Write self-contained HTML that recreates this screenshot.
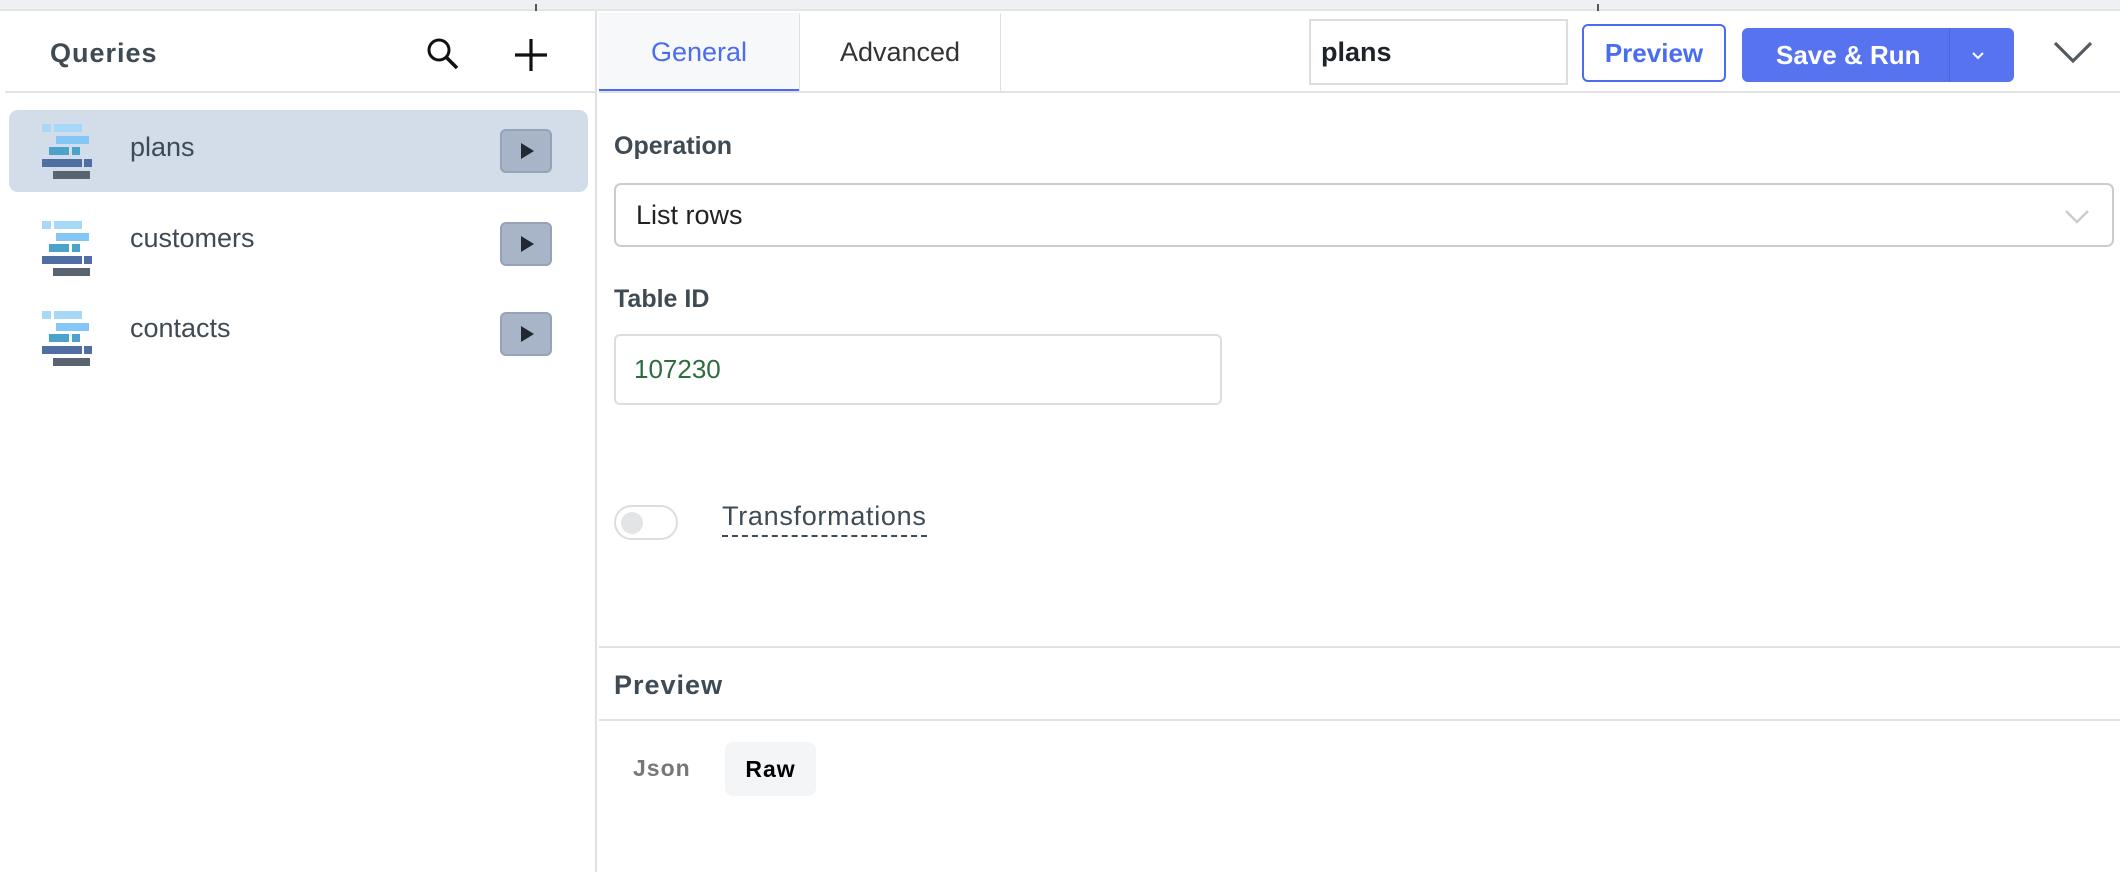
<!DOCTYPE html>
<html><head><meta charset="utf-8"><style>
*{box-sizing:border-box;margin:0;padding:0}
body{width:2120px;height:872px;background:#fff;font-family:"Liberation Sans",Arial,sans-serif;position:relative;overflow:hidden;color:#3e4b55}
.abs{position:absolute}
.topbar{left:0;top:0;width:2120px;height:11px;background:#eef0f4;border-bottom:2px solid #e2e4e8}
.side{left:0;top:11px;width:597px;height:861px;border-right:2px solid #e0e0e0}
.hline{height:2px;background:#e2e2e2}
.row{left:9px;width:579px;height:82px;border-radius:9px}
.row .t{position:absolute;left:121px;top:0;line-height:82px;font-size:27px;color:#3e4b55}
.play{position:absolute;left:491px;top:19px;width:52px;height:44px;background:#a8b4c8;border:2px solid #96a2b6;border-radius:6px}
.play:after{content:"";position:absolute;left:19px;top:12px;border-left:13px solid #222831;border-top:8px solid transparent;border-bottom:8px solid transparent}
.ico{position:absolute;left:33px;top:14px}
.lbl{font-weight:bold;font-size:25px;color:#3e4b55}
</style></head><body>
<div class="abs topbar"></div>
<div class="abs" style="left:535px;top:4px;width:2px;height:7px;background:#555"></div>
<div class="abs" style="left:1597px;top:4px;width:2px;height:7px;background:#555"></div>
<div class="abs side"></div>
<div class="abs" style="left:50px;top:38px;font-size:27px;font-weight:bold;letter-spacing:1px;color:#3e4b55">Queries</div>
<svg class="abs" style="left:425px;top:36px" width="36" height="36" viewBox="0 0 36 36"><circle cx="14" cy="14" r="10" fill="none" stroke="#111" stroke-width="3"/><line x1="21" y1="21" x2="32" y2="32" stroke="#111" stroke-width="3.5"/></svg>
<svg class="abs" style="left:514px;top:38px" width="34" height="34" viewBox="0 0 34 34"><line x1="17" y1="1" x2="17" y2="33" stroke="#111" stroke-width="3.2"/><line x1="1" y1="17" x2="33" y2="17" stroke="#111" stroke-width="3.2"/></svg>
<div class="abs hline" style="left:5px;top:91px;width:592px"></div>

<svg width="0" height="0" style="position:absolute"><defs><g id="ic">
<rect x="0" y="0" width="9" height="8" fill="#a8d8f8"/><rect x="12" y="0" width="28" height="8" fill="#a8d8f8"/>
<rect x="14" y="12" width="33" height="8" fill="#84c6f6"/>
<rect x="7" y="23" width="20" height="8" fill="#4ba3cc"/><rect x="30" y="23" width="8" height="8" fill="#4ba3cc"/>
<rect x="0" y="35" width="40" height="8" fill="#4f6ea3"/><rect x="42" y="35" width="8" height="8" fill="#4f6ea3"/>
<rect x="11" y="47" width="37" height="8" fill="#5a6470"/></g></defs></svg>

<div class="abs row" style="top:110px;background:#d3dce9"><svg class="ico" width="50" height="56"><use href="#ic"/></svg><div class="t" style="top:-4px">plans</div><div class="play"></div></div>
<div class="abs row" style="top:197px"><svg class="ico" width="50" height="56" style="top:24px"><use href="#ic"/></svg><div class="t">customers</div><div class="play" style="top:25px"></div></div>
<div class="abs row" style="top:287px"><svg class="ico" width="50" height="56" style="top:24px"><use href="#ic"/></svg><div class="t">contacts</div><div class="play" style="top:25px"></div></div>

<div class="abs" style="left:599px;top:13px;width:200px;height:79px;background:#f7f8fa;border-bottom:3px solid #4a6cf0;color:#4a6cf0;font-size:27px;text-align:center;line-height:78px">General</div>
<div class="abs" style="left:799px;top:13px;width:202px;height:79px;border-left:1px solid #e0e0e0;border-right:1px solid #e0e0e0;font-size:27px;text-align:center;line-height:78px;color:#333">Advanced</div>
<div class="abs hline" style="left:599px;top:91px;width:1521px"></div>
<div class="abs" style="left:1309px;top:19px;width:259px;height:66px;border:2px solid #ddd;font-size:27px;font-weight:bold;line-height:62px;padding-left:10px;color:#1f2329">plans</div>
<div class="abs" style="left:1582px;top:24px;width:144px;height:58px;border:2px solid #4a6cf0;border-radius:6px;font-size:26px;font-weight:bold;color:#4a6cf0;text-align:center;line-height:54px">Preview</div>
<div class="abs" style="left:1742px;top:28px;width:272px;height:54px;background:#5773f0;border-radius:6px;color:#fff;font-size:26px;font-weight:bold;line-height:54px;padding-left:34px">Save &amp; Run</div>
<div class="abs" style="left:1949px;top:28px;width:1px;height:54px;background:#4c66d8"></div>
<svg class="abs" style="left:1971px;top:51px" width="14" height="10"><polyline points="2,2 7,7 12,2" fill="none" stroke="#fff" stroke-width="2"/></svg>
<svg class="abs" style="left:2052px;top:40px" width="42" height="26"><polyline points="3,3 21,21 39,3" fill="none" stroke="#555b63" stroke-width="3.2"/></svg>

<div class="abs lbl" style="left:614px;top:132px">Operation</div>
<div class="abs" style="left:614px;top:183px;width:1500px;height:64px;border:2px solid #ccc;border-radius:7px;font-size:27px;line-height:60px;padding-left:20px;color:#222">List rows</div>
<svg class="abs" style="left:2064px;top:209px" width="26" height="16"><polyline points="2,2 13,13 24,2" fill="none" stroke="#ccc" stroke-width="2.5"/></svg>
<div class="abs lbl" style="left:614px;top:285px">Table ID</div>
<div class="abs" style="left:614px;top:334px;width:608px;height:71px;border:2px solid #ddd;border-radius:6px;font-size:26px;line-height:67px;padding-left:18px;color:#2e6b3e">107230</div>

<div class="abs" style="left:614px;top:505px;width:64px;height:35px;border:2px solid #ddd;border-radius:18px"><div style="position:absolute;left:5px;top:5px;width:22px;height:22px;border-radius:50%;background:#e3e4e6"></div></div>
<div class="abs" style="left:722px;top:501px;font-size:27px;letter-spacing:0.7px;color:#3e4b55;padding-bottom:3px;border-bottom:2px dashed #3e4b55">Transformations</div>

<div class="abs hline" style="left:599px;top:646px;width:1521px"></div>
<div class="abs" style="left:614px;top:670px;font-size:27px;font-weight:bold;letter-spacing:1px;color:#3e4b55">Preview</div>
<div class="abs hline" style="left:599px;top:719px;width:1521px"></div>
<div class="abs" style="left:633px;top:755px;font-size:23px;font-weight:bold;color:#777;letter-spacing:1px">Json</div>
<div class="abs" style="left:725px;top:742px;width:91px;height:54px;background:#f4f5f7;border-radius:8px;font-size:23px;font-weight:bold;color:#000;text-align:center;line-height:54px;letter-spacing:1px">Raw</div>
</body></html>
